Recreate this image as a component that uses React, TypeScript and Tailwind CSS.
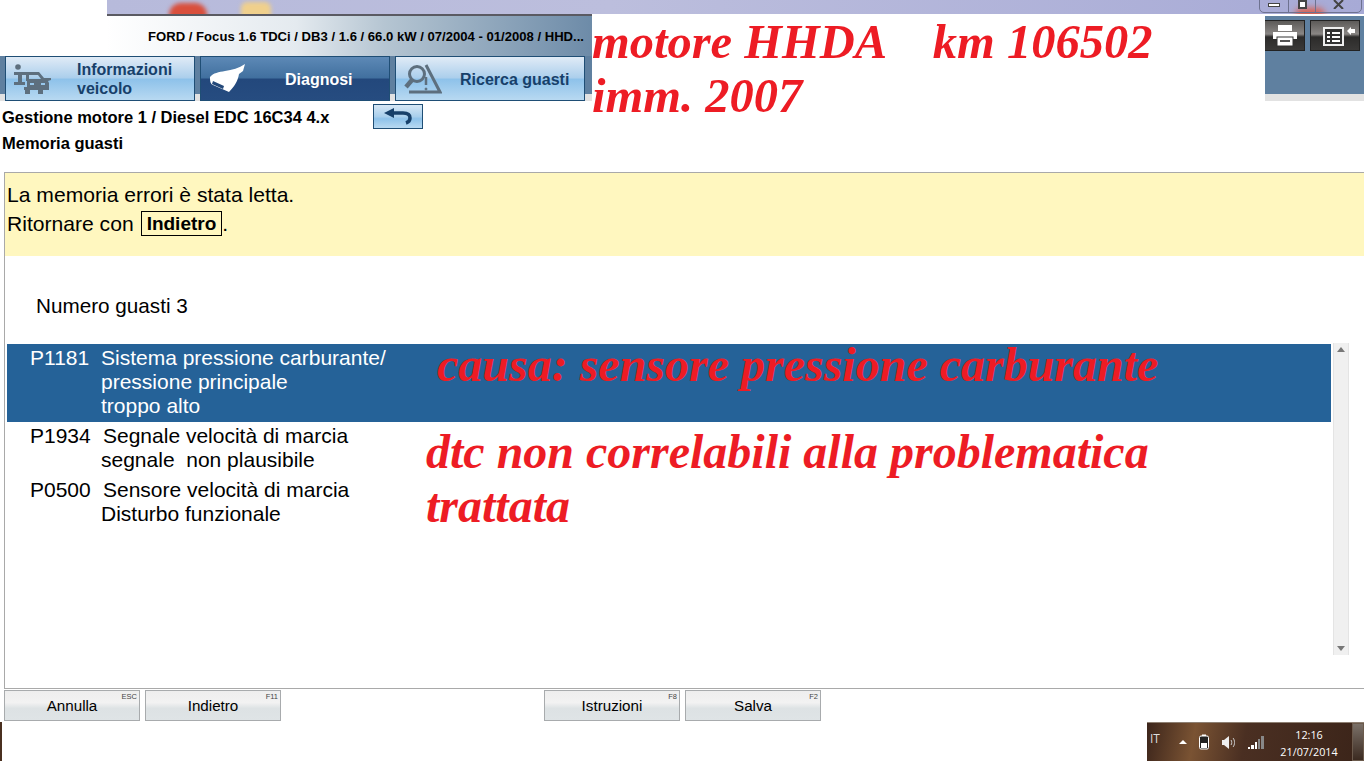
import type { ReactNode } from "react";

const sans = "font-['Liberation_Sans',Arial,sans-serif]";
const red = "font-['Liberation_Serif','Times_New_Roman',serif] font-bold italic text-[#ed1c24] whitespace-pre absolute leading-[52px]";
const darkButton = "h-[31px] border-y border-r border-[#222] bg-[linear-gradient(#5c5a58_0%,#8a8785_45%,#2c2b2a_55%,#3a3938_100%)] flex items-center";

const InfoIcon = () => (
  <svg width="38" height="30" viewBox="0 0 38 30">
    <g fill="#5d6f7e" fillRule="evenodd">
      <circle cx="4" cy="3" r="2.8" />
      <path d="M0 8h8v10h3v3H0v-3h4v-7H0z" />
      <path d="M8 8h17l5 6h7v2l-3 1 1 2v7h-6v4h-5v-4H16v4h-5v-4h-1v-3h3v-6h-1v-6H8z M15 11v4h12l-3-4z M16 19v2h4v-2z M27 19v2h4v-2z" />
    </g>
  </svg>
);

const ObdIcon = () => (
  <svg width="37" height="29" viewBox="0 0 37 29">
    <path d="M1 13C4 9 10 8 16 7C23 6 30 4 36 0L34 7L30 10C29 17 25 23 20 28L4 21C1 20 1 16 1 13Z" fill="#fff" />
    <path d="M4 17L15 22L14 25L3 20Z" fill="#24497a" />
  </svg>
);

const FaultIcon = () => (
  <svg width="38" height="30" viewBox="0 0 38 30" fill="none" stroke="#5d6f7e" strokeWidth="3">
    <path d="M22 1L36 28H5" />
    <circle cx="13" cy="10" r="7.5" />
    <path d="M8 16L2 23" strokeWidth="4.5" />
    <path d="M22 13v8" strokeWidth="2.5" />
    <circle cx="22" cy="25" r="1" fill="#5d6f7e" strokeWidth="1" />
  </svg>
);

const Tab = ({ icon, children, active, iconClass }: { icon: ReactNode; children: ReactNode; active?: boolean; iconClass: string }) => (
  <div
    className={`w-[190px] h-[45px] flex items-center border border-[#1f4e75] ${
      active
        ? "bg-[linear-gradient(#5d89b6_0%,#41709f_48%,#23487c_52%,#264c80_100%)] text-white"
        : "bg-[linear-gradient(#e0ebf6_0%,#accfec_48%,#8ec2ea_52%,#b8d9f1_100%)] text-[#17406a]"
    }`}
  >
    <div className={`${iconClass} pl-[8px] shrink-0 flex items-center`}>{icon}</div>
    <div className="text-[16px] font-bold leading-[19px] pt-[1px] whitespace-nowrap">{children}</div>
  </div>
);

const KeyButton = ({ label, hint }: { label: string; hint: string }) => (
  <div className="relative w-[136px] h-[31px] pt-[1px] border border-[#a8abad] bg-[linear-gradient(#eeeeee_0%,#f2f2f2_40%,#dde2e4_60%,#dfe4e6_100%)] flex items-center justify-center text-[15.2px] text-black">
    {label}
    <span className="absolute right-[2px] top-[1px] text-[7.5px] leading-[9px] text-[#444]">{hint}</span>
  </div>
);

const Fault = ({ code, lines, selected }: { code: string; lines: string[]; selected?: boolean }) => (
  <div className={`pl-[23px] flex text-[21px] leading-[24px] ${selected ? "bg-[#256298] text-white pt-[2px] pb-[4px]" : "text-black"}`}>
    <div className={selected ? "w-[71px]" : "w-[73px]"}>{code}</div>
    <div>
      {lines.map((line, i) => (
        <div key={i} className={`whitespace-pre ${i > 0 && !selected ? "-ml-[2px]" : ""}`}>
          {line}
        </div>
      ))}
    </div>
  </div>
);

export default function App() {
  return (
    <div className={`relative w-[1364px] h-[761px] overflow-hidden bg-white flex flex-col ${sans}`}>
      {/* Window behind */}
      <div className="h-[14px] ml-[107px] shrink-0 relative bg-[linear-gradient(90deg,#b7badb_0%,#bcbedd_40%,#a7aad6_100%)] overflow-hidden">
        <div className="absolute left-[62px] top-[3px] w-[38px] h-[24px] rounded-full bg-[#d94f3c] blur-[2px]" />
        <div className="absolute left-[134px] top-[2px] w-[30px] h-[22px] rounded-[6px] bg-[#f0d08c] blur-[2px]" />
        <div className="absolute left-[1188px] top-[8px] w-[30px] h-[14px] rounded-full bg-[#d9604f] blur-[3px]" />
        <div className="absolute right-[2px] -top-[4px] w-[103px] h-[17px] border border-[#6e7290] rounded-b-[5px] flex">
          <div className="w-[29px] border-r border-[#6e7290] flex justify-center pt-[6px]">
            <div className="w-[12px] h-[4px] bg-white border border-[#444]" />
          </div>
          <div className="w-[27px] border-r border-[#6e7290] flex justify-center pt-[3px]">
            <div className="w-[9px] h-[9px] bg-white border-2 border-[#444]" />
          </div>
          <div className="flex-1 flex justify-center pt-[3px]">
            <svg width="11" height="9" viewBox="0 0 11 9" stroke="#444" strokeWidth="2">
              <path d="M1 0l9 9M10 0L1 9" />
            </svg>
          </div>
        </div>
      </div>
      <div className="h-[2px] shrink-0 flex">
        <div className="w-[107px]" />
        <div className="w-[485px] bg-[#5a5a62]" />
      </div>

      {/* Header */}
      <div className="h-[85px] flex shrink-0">
        <div className="w-[592px] h-full flex flex-col">
          <div className="h-[40px] pr-[8px] flex items-end justify-end text-[13.1px] font-bold text-black leading-[19px] pb-[10px] bg-[linear-gradient(90deg,#ffffff_0%,#ffffff_18%,#e4eaef_50%,#b5c5d2_65%,#6d8ba8_100%)]">
            FORD / Focus 1.6 TDCi / DB3 / 1.6 / 66.0 kW / 07/2004 - 01/2008 / HHD...
          </div>
          <div className="h-[45px] flex gap-[5px] pl-[5px] bg-[linear-gradient(#5f80a0_0%,#5f80a0_84%,#e2e2e2_84%)]">
            <Tab icon={<InfoIcon />} iconClass="w-[71px]">
              Informazioni
              <br />
              veicolo
            </Tab>
            <Tab icon={<ObdIcon />} iconClass="w-[84px]" active>
              Diagnosi
            </Tab>
            <Tab icon={<FaultIcon />} iconClass="w-[64px]">
              Ricerca guasti
            </Tab>
          </div>
        </div>
        <div className="flex-1" />
        <div className="w-[99px] h-full bg-[#5f80a0] flex flex-col">
          <div className="flex-1 pt-[4px] flex gap-[5px] justify-start">
            <div className={`${darkButton} w-[40px] justify-center pl-[1px]`}>
              <svg width="26" height="23" viewBox="0 0 26 23" fill="#fff">
                <rect x="6" y="1" width="14" height="6" />
                <rect x="1" y="8" width="24" height="7" />
                <rect x="5" y="13" width="16" height="9" fill="#fff" stroke="#333" />
                <rect x="8" y="16" width="10" height="2" fill="#555" />
              </svg>
            </div>
            <div className={`${darkButton} w-[50px] border-l pl-[12px]`}>
              <svg width="33" height="20" viewBox="0 0 33 20">
                <rect x="1" y="2" width="19" height="17" fill="#333" stroke="#eee" strokeWidth="2" />
                <path d="M4 6h3v2H4zM9 6h8v2H9zM4 10h3v2H4zM9 10h8v2H9zM4 14h3v2H4zM9 14h8v2H9z" fill="#fff" />
                <path d="M24 5l4-4v2h4v4h-4v2z" fill="#fff" />
              </svg>
            </div>
          </div>
          <div className="h-[7px] bg-[#e2e2e2]" />
        </div>
      </div>

      {/* Breadcrumb */}
      <div className="h-[71px] shrink-0 pl-[2px] text-[16.5px] font-bold text-black whitespace-nowrap">
        <div className="flex items-start h-[26px] pt-[3px]">
          <div className="w-[371px] leading-[24px] pt-[1px]">Gestione motore 1 / Diesel EDC 16C34 4.x</div>
          <div className="w-[50px] h-[25px] border border-[#1f4e75] bg-[linear-gradient(#d6e7f5_0%,#a9cfec_50%,#8ec2ea_60%,#b8d9f1_100%)] flex items-center justify-center">
            <svg width="30" height="17" viewBox="0 0 30 17" fill="none">
              <path d="M9 5h11c5 0 7 2 7 5c0 2-1 4-4 5" stroke="#17406a" strokeWidth="3.5" />
              <path d="M1 5L11 0v10z" fill="#17406a" />
            </svg>
          </div>
        </div>
        <div className="leading-[20px] pt-[6px]">Memoria guasti</div>
      </div>

      {/* Main panel */}
      <div className="ml-[4px] h-[517px] shrink-0 border border-r-0 border-[#a9a9a9] flex flex-col">
        <div className="h-[83px] shrink-0 bg-[#fff7bf] pl-[2px] pt-[7px] text-[21.1px] leading-[29px] text-black">
          <div>La memoria errori è stata letta.</div>
          <div className="flex items-center">
            Ritornare con
            <span className="ml-[7px] border border-black px-[5px] font-bold text-[19px] leading-[23px]">Indietro</span>.
          </div>
        </div>
        <div className="h-[88px] shrink-0 pl-[31px] pt-[38px] text-[20.7px] leading-[24px] text-black">Numero guasti 3</div>
        <div className="flex flex-1 pl-[2px]">
          <div className="w-[1324px] flex flex-col gap-[6px]">
            <Fault
              selected
              code="P1181"
              lines={["Sistema pressione carburante/", "pressione principale", "troppo alto"]}
            />
            <div className="-mt-[4px]">
              <Fault code="P1934" lines={["Segnale velocità di marcia", "segnale  non plausibile"]} />
            </div>
            <Fault code="P0500" lines={["Sensore velocità di marcia", "Disturbo funzionale"]} />
          </div>
          <div className="ml-[2px] w-[16px] h-[312px] -mt-[1px] bg-[#f0f0f0] border-x border-[#e4e4e4] flex flex-col justify-between items-center py-[4px]">
            <div className="w-0 h-0 border-x-[4px] border-x-transparent border-b-[5px] border-b-[#777]" />
            <div className="w-0 h-0 border-x-[4px] border-x-transparent border-t-[5px] border-t-[#777]" />
          </div>
        </div>
      </div>

      {/* Function keys */}
      <div className="pl-[4px] pt-[1px] flex shrink-0">
        <div className="flex gap-[5px]">
          <KeyButton label="Annulla" hint="ESC" />
          <KeyButton label="Indietro" hint="F11" />
        </div>
        <div className="flex gap-[5px] ml-[263px]">
          <KeyButton label="Istruzioni" hint="F8" />
          <KeyButton label="Salva" hint="F2" />
        </div>
      </div>

      {/* Taskbar */}
      <div className="flex justify-between items-stretch flex-1 pt-[1px] font-['Open_Sans',sans-serif]">
        <div className="w-[2px] bg-[#4a3020]" />
        <div className="w-[217px] border-t border-[#8d7f72] bg-[linear-gradient(100deg,#3c251b_0%,#7a5333_22%,#4a2f22_45%,#3b2419_100%)] flex text-white">
          <div className="w-[29px] pl-[3px] pt-[8px] text-[12px] leading-[16px] text-[#ddd]">IT</div>
          <div className="w-[90px] flex items-center gap-[11px] pl-[3px]">
            <div className="w-0 h-0 border-x-[4px] border-x-transparent border-b-[4px] border-b-white" />
            <svg width="12" height="16" viewBox="0 0 12 16">
              <rect x="1.5" y="2" width="9" height="13" rx="1.5" fill="#222" stroke="#fff" />
              <rect x="4" y="0.5" width="4" height="1.5" fill="#fff" />
              <rect x="3" y="9" width="6" height="5" fill="#fff" />
            </svg>
            <svg width="16" height="15" viewBox="0 0 16 15" fill="none">
              <path d="M1 5h2l5-4v13l-5-4H1z" fill="#eee" />
              <path d="M10 5c1 1 1 4 0 5M12 3c2 2 2 7 0 9" stroke="#ccc" />
            </svg>
            <svg width="17" height="15" viewBox="0 0 17 15">
              <rect x="0" y="12" width="2" height="2" fill="#fff" />
              <rect x="3" y="10" width="3" height="4" fill="#fff" />
              <rect x="7" y="7" width="2" height="7" fill="#fff" />
              <rect x="10" y="4" width="2" height="10" fill="#888" />
              <rect x="13" y="1" width="3" height="13" fill="#888" />
            </svg>
          </div>
          <div className="w-[86px] text-center pt-[3px] text-[10.8px] leading-[17px]">
            <div>12:16</div>
            <div>21/07/2014</div>
          </div>
          <div className="flex-1 border border-[#6b5a4c] bg-[linear-gradient(#7a7068,#3b2a20)]" />
        </div>
      </div>

      {/* Handwritten notes */}
      <div className={`${red} left-[592px] top-[16px] text-[48.5px]`}>motore HHDA    km 106502</div>
      <div className={`${red} left-[592px] top-[70px] text-[48.5px]`}>imm. 2007</div>
      <div className={`${red} left-[437px] top-[339px] text-[48px]`}>causa: sensore pressione carburante</div>
      <div className={`${red} left-[426px] top-[426px] text-[48px]`}>dtc non correlabili alla problematica</div>
      <div className={`${red} left-[426px] top-[480px] text-[48px]`}>trattata</div>
    </div>
  );
}
